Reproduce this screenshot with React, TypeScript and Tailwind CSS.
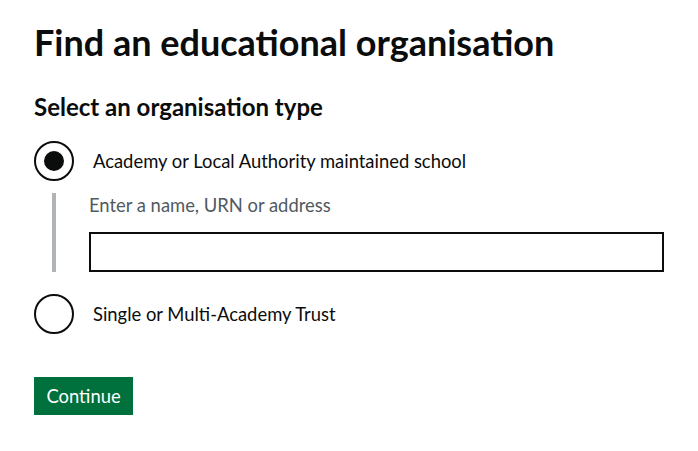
import { useState } from "react";

function Radio({ checked, label, onSelect }: { checked: boolean; label: string; onSelect: () => void }) {
  return (
    <label className="flex items-center cursor-pointer" onClick={onSelect}>
      <span className="flex h-10 w-10 shrink-0 items-center justify-center rounded-full border-2 border-[#0b0c0c] bg-white">
        {checked && <span className="h-5 w-5 rounded-full bg-[#0b0c0c]" />}
      </span>
      <span className="pl-[19px] text-[18.4px] leading-[25px] text-[#0b0c0c]">{label}</span>
    </label>
  );
}

export default function App() {
  const [type, setType] = useState("school");
  const [query, setQuery] = useState("");

  return (
    <main className="bg-white px-[34px] pt-[22px] font-['Lato',sans-serif] text-[#0b0c0c]">
      <h1 className="text-[36px] font-bold leading-[40px]">Find an educational organisation</h1>

      <fieldset className="mt-[30px]">
        <legend className="text-[24px] font-bold leading-[30px]">Select an organisation type</legend>

        <div className="mt-[19px]">
          <Radio
            checked={type === "school"}
            label="Academy or Local Authority maintained school"
            onSelect={() => setType("school")}
          />
        </div>

        {type === "school" && (
          <div className="ml-[18px] mt-[12px] border-l-4 border-[#b1b4b6] pl-[33px]">
            <label htmlFor="search" className="block text-[18.4px] leading-[25px] text-[#505a5f]">
              Enter a name, URN or address
            </label>
            <input
              id="search"
              value={query}
              onChange={(e) => setQuery(e.target.value)}
              className="mt-[14px] block h-10 w-[575px] border-2 border-[#0b0c0c] px-1 text-[18.4px] outline-none"
            />
          </div>
        )}

        <div className={type === "school" ? "mt-[22px]" : "mt-[10px]"}>
          <Radio checked={type === "trust"} label="Single or Multi-Academy Trust" onSelect={() => setType("trust")} />
        </div>
      </fieldset>

      <button className="mt-[43px] flex h-[38px] w-[99px] items-center justify-center bg-[#00703c] text-[18.4px] leading-[25px] text-white shadow-[0_2px_0_#002d18]">
        Continue
      </button>
    </main>
  );
}
